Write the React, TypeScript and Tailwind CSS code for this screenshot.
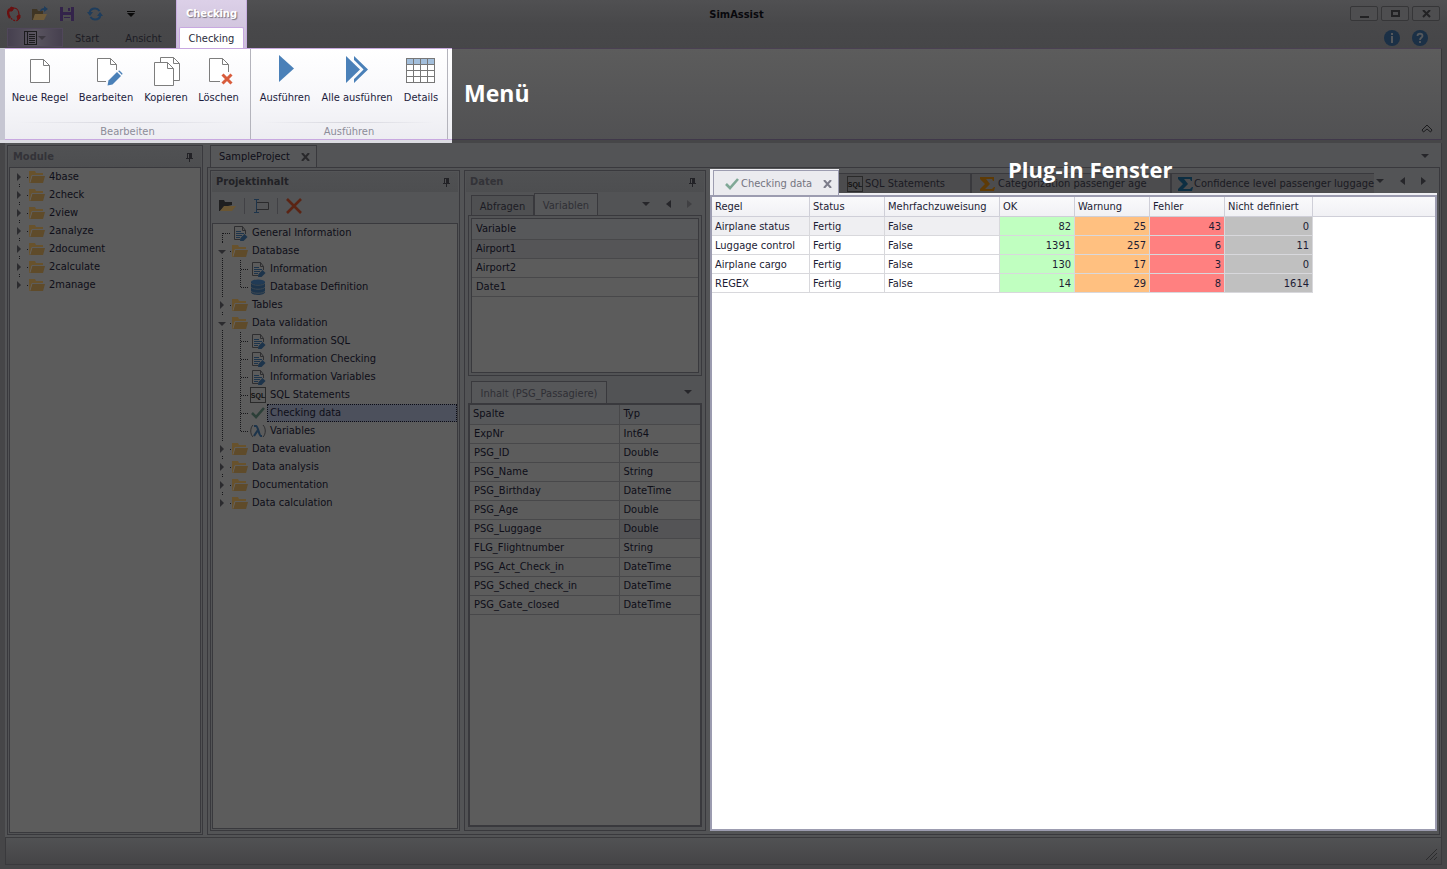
import React, { useState } from "react";

type TreeNode = {
  label: string;
  icon: string;
  open?: boolean;
  children?: TreeNode[];
};

const modules: TreeNode[] = [
  "4base",
  "2check",
  "2view",
  "2analyze",
  "2document",
  "2calculate",
  "2manage",
].map((label) => ({ label, icon: "folder", children: [] }));

const project: TreeNode[] = [
  { label: "General Information", icon: "note" },
  {
    label: "Database",
    icon: "folder",
    open: true,
    children: [
      { label: "Information", icon: "note" },
      { label: "Database Definition", icon: "database" },
    ],
  },
  { label: "Tables", icon: "folder", children: [] },
  {
    label: "Data validation",
    icon: "folder",
    open: true,
    children: [
      { label: "Information SQL", icon: "note" },
      { label: "Information Checking", icon: "note" },
      { label: "Information Variables", icon: "note" },
      { label: "SQL Statements", icon: "sql" },
      { label: "Checking data", icon: "check" },
      { label: "Variables", icon: "lambda" },
    ],
  },
  { label: "Data evaluation", icon: "folder", children: [] },
  { label: "Data analysis", icon: "folder", children: [] },
  { label: "Documentation", icon: "folder", children: [] },
  { label: "Data calculation", icon: "folder", children: [] },
];

const columns = [
  ["ExpNr", "Int64"],
  ["PSG_ID", "Double"],
  ["PSG_Name", "String"],
  ["PSG_Birthday", "DateTime"],
  ["PSG_Age", "Double"],
  ["PSG_Luggage", "Double"],
  ["FLG_Flightnumber", "String"],
  ["PSG_Act_Check_in", "DateTime"],
  ["PSG_Sched_check_in", "DateTime"],
  ["PSG_Gate_closed", "DateTime"],
];

const rules = [
  { name: "Airplane status", ok: 82, warn: 25, error: 43, undef: 0 },
  { name: "Luggage control", ok: 1391, warn: 257, error: 6, undef: 11 },
  { name: "Airplane cargo", ok: 130, warn: 17, error: 3, undef: 0 },
  { name: "REGEX", ok: 14, warn: 29, error: 8, undef: 1614 },
];

/* ---------- icons ---------- */

const FolderIcon = () => (
  <svg width="16" height="14" viewBox="0 0 16 14">
    <path d="M0 1h6l1 2h7v2H3L1 13H0z" fill="#68522c" />
    <path d="M3 6h13l-2 7H1z" fill="#5f4b2a" />
    <path d="M1 12.500l2-7" stroke="#66615a" fill="none" />
  </svg>
);

const NoteIcon = () => (
  <svg width="15" height="15" viewBox="0 0 15 15" fill="none">
    <path d="M12.500 8V4.500l-3-4h-8v13h6M9.500 .5v4h3" stroke="#2e2e30" />
    <path d="M3 5.500h5M3 7.500h8M3 9.500h6M3 11.500h4" stroke="#1d344b" />
    <path d="M7 15l.5-3 4-4 3 3-4 4z" fill="#1d344b" />
  </svg>
);

const DatabaseIcon = () => (
  <svg width="14" height="16" viewBox="0 0 14 16">
    <path d="M0 3v10c0 4 14 4 14 0V3z" fill="#1d344b" />
    <ellipse cx="7" cy="3" rx="7" ry="2.500" fill="#213b56" />
    <path
      d="M0 4c1 3 13 3 14 0M0 8c1 3 13 3 14 0M0 12c1 3 13 3 14 0"
      stroke="#3e4851"
      fill="none"
    />
  </svg>
);

const SqlIcon = () => (
  <svg width="16" height="16" viewBox="0 0 16 16" className="shrink-0">
    <rect x=".5" y=".5" width="15" height="15" fill="none" stroke="#2a2a2a" />
    <text
      x="8"
      y="11"
      textAnchor="middle"
      fontSize="7"
      fontWeight="bold"
      fontFamily="Liberation Sans, sans-serif"
      fill="#111"
    >
      SQL
    </text>
  </svg>
);

const CheckIcon = ({ color = "#2c3f38" }: any) => (
  <svg width="14" height="12" viewBox="0 0 14 12" className="shrink-0">
    <path d="M1 6l4 4 8-9" fill="none" stroke={color} strokeWidth="2.600" />
  </svg>
);

const LambdaIcon = () => (
  <svg width="16" height="14" viewBox="0 0 16 14" fill="none">
    <path d="M3 1C0 4 0 10 3 13M13 1c3 3 3 9 0 12" stroke="#2e2e30" />
    <path
      d="M4 2h2c2 0 3 10 5 10h1M8 6l-4 6"
      stroke="#1d344b"
      strokeWidth="2.200"
    />
  </svg>
);

const SigmaIcon = ({ color }: any) => (
  <svg width="15" height="14" viewBox="0 0 15 14" className="shrink-0">
    <path
      d="M0 0h14v4h-1l-1-2H6l4 5-5 5h7l2-2h1l-1 4H0v-2l5-5-5-5z"
      fill={color}
    />
  </svg>
);

const PinIcon = () => (
  <svg width="7" height="9" viewBox="0 0 7 9" shapeRendering="crispEdges">
    <path d="M1 0h5v5h1v1H4v3H3V6H0V5h1z" fill="#222226" />
    <path d="M2 1h1v4H2z" fill="#515153" />
  </svg>
);

const CrossIcon = ({ color = "#29292c" }: any) => (
  <svg width="9" height="8" viewBox="0 0 9 8">
    <path d="M1 0l7 8M8 0L1 8" stroke={color} strokeWidth="2" />
  </svg>
);

const Triangle = ({ dir, color = "#26262a" }: any) => {
  if (dir === "down") {
    return (
      <svg width="8" height="4" viewBox="0 0 8 4">
        <path d="M0 0h8L4 4z" fill={color} />
      </svg>
    );
  }
  return (
    <svg width="5" height="8" viewBox="0 0 5 8">
      <path d={dir === "left" ? "M5 0v8L0 4z" : "M0 0v8l5-4z"} fill={color} />
    </svg>
  );
};

const nodeIcons: any = {
  folder: <FolderIcon />,
  note: <NoteIcon />,
  database: <DatabaseIcon />,
  sql: <SqlIcon />,
  check: <CheckIcon />,
  lambda: <LambdaIcon />,
};

const Page = ({ d = "M.5 .5h13l6 6v17H.5z", fold = "M13.500 .5v6h6" }: any) => (
  <>
    <path d={d} fill="#fff" stroke="#7d7d7d" />
    <path d={fold} fill="none" stroke="#7d7d7d" />
  </>
);

const ribbonIcons: any = {
  new: (
    <svg width="20" height="26" viewBox="0 0 20 26">
      <Page />
    </svg>
  ),
  edit: (
    <svg width="34" height="28" viewBox="-8 0 34 28">
      <path d="M9 23.500H.5V.5h13l6 6V12" fill="#fff" stroke="#7d7d7d" />
      <path d="M13.500 .5v6h6" fill="none" stroke="#7d7d7d" />
      <path d="M10.500 27.500l1-5 8.500-8.500 4 4-8.500 8.500z" fill="#4a80b8" />
      <path d="M21 13l1.500-.5 3 3L25 17z" fill="#4a80b8" />
    </svg>
  ),
  copy: (
    <svg width="28" height="29" viewBox="-2 0 28 29">
      <g transform="translate(6 0)">
        <Page />
      </g>
      <g transform="translate(0 5)">
        <Page />
      </g>
    </svg>
  ),
  remove: (
    <svg width="29" height="27" viewBox="-5 0 29 27">
      <path d="M11 23.500H.5V.5h13l6 6V14" fill="#fff" stroke="#7d7d7d" />
      <path d="M13.500 .5v6h6" fill="none" stroke="#7d7d7d" />
      <path d="M13.500 16.500l9 9M22.500 16.500l-9 9" stroke="#d85c3c" strokeWidth="3" />
    </svg>
  ),
  run: (
    <svg width="18" height="33" viewBox="-3 0 18 33">
      <path d="M0 0l15 13.500L0 27z" fill="#4a80b8" />
    </svg>
  ),
  runAll: (
    <svg width="22" height="31" viewBox="0 0 22 31">
      <path d="M0 0l14 13.500L0 27z" fill="#4a80b8" />
      <path d="M8 0l14 13.500L8 27v-5.500l8-8-8-8z" fill="#4a80b8" />
      <path d="M7 4l9.500 9.500L7 23" fill="none" stroke="#fff" strokeWidth="1.500" />
    </svg>
  ),
  details: (
    <svg width="31" height="27" viewBox="0 0 31 27" shapeRendering="crispEdges">
      <rect width="29" height="25" fill="#fff" />
      <rect width="29" height="6" fill="#a3bfdc" />
      <path
        d="M0 .5h29M0 6.500h29M0 12.500h29M0 18.500h29M0 24.500h29M.5 0v25M7.500 0v25M14.500 0v25M21.500 0v25M28.500 0v25"
        stroke="#777"
        fill="none"
      />
    </svg>
  ),
};

/* ---------- small parts ---------- */

const RibbonButton = ({ icon, label, width }: any) => (
  <button className={`flex flex-col items-center ${width}`}>
    <span className="flex h-[37px] items-center justify-center">
      {ribbonIcons[icon]}
    </span>
    <span className="whitespace-nowrap leading-4">{label}</span>
  </button>
);

const RibbonGroup = ({ title, children }: any) => (
  <div className="flex flex-col border-r border-[#b4b4bc]">
    <div className="flex h-[73px] px-1 pt-[4px]">{children}</div>
    <div className="mx-3 h-px bg-gradient-to-r from-transparent via-[#d4d4dc] to-transparent" />
    <div className="h-4 text-center leading-[18px] text-[#8c8c98]">{title}</div>
  </div>
);

const Guide = ({ line, arrow, branch, first, last }: any) => {
  const from = first ? 9 : 0;
  const to = last ? 9 : 18;
  return (
    <svg
      width="18"
      height="18"
      viewBox="0 0 18 18"
      className="shrink-0"
      fill="none"
      stroke="#17171a"
      strokeDasharray="1 1"
      shapeRendering="crispEdges"
    >
      {line && !arrow && <path d={`M9.500 ${from}V${to}`} />}
      {arrow && !first && <path d="M9.500 0v2" />}
      {arrow && !last && <path d="M9.500 16v2" />}
      {branch && !arrow && <path d="M10 9.500h8" />}
      {arrow && <path d="M17 9.500h1" />}
      {arrow && (
        <path
          d={arrow === "right" ? "M7 5v8l4-4z" : "M5 8h8l-4 4z"}
          fill="#2b2b2e"
          stroke="none"
          shapeRendering="auto"
        />
      )}
    </svg>
  );
};

const TreeLabel = ({ node, selected, onSelect }: any) => (
  <>
    <span className="flex w-[18px] shrink-0 items-center justify-center">
      {nodeIcons[node.icon]}
    </span>
    <button
      onClick={() => onSelect(node.label)}
      className={`h-[18px] whitespace-nowrap border border-dotted pl-0.5 pr-1 text-left leading-4 ${
        selected === node.label
          ? "flex-1 border-[#0c0c14] bg-[#4c505c]"
          : "border-transparent"
      }`}
    >
      {node.label}
    </button>
  </>
);

const Tree = ({ nodes, selected, onSelect }: any) => (
  <ul>
    {nodes.map((node: TreeNode, i: number) => {
      const last = i === nodes.length - 1;
      return (
        <li key={node.label}>
          <div className="flex h-[18px] items-center">
            <Guide
              line
              branch
              first={i === 0}
              last={last}
              arrow={node.children && (node.open ? "down" : "right")}
            />
            <TreeLabel node={node} selected={selected} onSelect={onSelect} />
          </div>
          {node.open && (
            <ul>
              {node.children?.map((child, j) => (
                <li key={child.label} className="flex h-[18px] items-center">
                  <Guide line={!last} />
                  <Guide line branch last={j === node.children!.length - 1} />
                  <TreeLabel node={child} selected={selected} onSelect={onSelect} />
                </li>
              ))}
            </ul>
          )}
        </li>
      );
    })}
  </ul>
);

const PanelHeader = ({ title, active }: any) => (
  <div className="flex h-5 shrink-0 items-center justify-between bg-gradient-to-b from-[#505153] to-[#4d4e50] pl-1 pr-2">
    <h2 className={`font-bold ${active ? "text-[#222226]" : "text-[#333338]"}`}>
      {title}
    </h2>
    <button aria-label="Fixieren">
      <PinIcon />
    </button>
  </div>
);

const TitleBar = () => (
  <header className="flex h-12 shrink-0 bg-gradient-to-b from-[#505052] via-[#48484a] to-[#464648]">
    <div className="flex w-44 flex-col">
      <div className="flex h-[27px] items-center pl-[7px]">
        <svg width="14" height="16" viewBox="0 0 14 16" fill="none" stroke="#6a1010">
          <path d="M3 3C0 5 1 9 3 12" strokeWidth="2.400" />
          <path d="M4 1l3 1-2 3-3 0z" fill="#6a1010" />
          <path d="M7 2c3 0 5 3 5 7" strokeWidth="1.200" />
          <path d="M4 12c2 3 5 3 7 2" strokeWidth="1.200" strokeDasharray="2 1" />
          <path d="M10 10l3-1v3l-2 2z" fill="#6a1010" />
        </svg>
        <button aria-label="Öffnen" className="ml-[11px]">
          <svg width="16" height="15" viewBox="0 0 16 15">
            <path d="M0 3h5l1 2h5v3H3l-2 6H0z" fill="#3f3524" />
            <path d="M3 8h12l-3 6H1z" fill="#6e5a38" />
            <path d="M8 6c0-3 2-4 4-4V0l4 3-4 3V4c-2 0-3 1-4 2z" fill="#1f3d5c" />
          </svg>
        </button>
        <button aria-label="Speichern" className="ml-3">
          <svg width="14" height="14" viewBox="0 0 14 14">
            <path d="M0 0h14v14H0z" fill="#33234a" />
            <path d="M3 0h8v5H3zM3 8h8v6H3z" fill="#4d4d4f" />
            <path d="M8 1h2v3H8zM4 10h6v1H4z" fill="#33234a" />
          </svg>
        </button>
        <button aria-label="Aktualisieren" className="ml-[13px]">
          <svg width="16" height="14" viewBox="0 0 16 14" fill="none">
            <path d="M2.500 6C3 3 5 1.500 8 1.500c2 0 3.500 1 4.500 2.500M13.500 8c-.5 3-2.500 4.500-5.500 4.500-2 0-3.500-1-4.500-2.500" stroke="#1f3d5c" strokeWidth="2" />
            <path d="M0 5h6L3 9zM10 9h6l-3-4z" fill="#1f3d5c" />
          </svg>
        </button>
        <button aria-label="Anpassen" className="ml-6">
          <svg width="8" height="6" viewBox="0 0 8 6">
            <path d="M0 0h8v1H0zM0 2h8L4 6z" fill="#0a0a0a" />
          </svg>
        </button>
      </div>
      <nav className="flex h-[21px] items-center text-[#1c1c24]">
        <button
          aria-label="Datei"
          className="ml-[7px] flex h-[19px] w-14 items-center justify-center gap-px border border-[#50475a] bg-gradient-to-r from-[#46404f] via-[#5a5560] to-[#46404f]"
        >
          <svg width="13" height="14" viewBox="0 0 13 14" fill="none" stroke="#1c1c1e" shapeRendering="crispEdges">
            <path d="M.5 .5h12v13H.5zM3.500 0v14M5 3.500h6M5 5.500h6M5 7.500h6M5 9.500h6M5 11.500h6" />
          </svg>
          <Triangle dir="down" color="#3c3840" />
        </button>
        <button className="ml-3 pt-0.5">Start</button>
        <button className="ml-[26px] pt-0.5">Ansicht</button>
      </nav>
    </div>
    <div className="flex w-[71px] flex-col border-x border-[#c8aee0] bg-gradient-to-b from-[#dcd0e8] to-[#cbbfd8]">
      <div className="h-[27px] text-center font-bold leading-[27px] text-white [text-shadow:1px_1px_1px_#77737f]">
        Checking
      </div>
      <button className="mx-[2px] h-[22px] rounded-t-xs border border-b-0 border-[#c8a8e0] bg-white pt-0.5 text-[#2a2a3a]">
        Checking
      </button>
    </div>
    <h1 className="flex-1 text-center font-bold leading-[29px] text-[#08080c]">
      SimAssist
    </h1>
    <div className="flex w-[221px] flex-col items-end pr-[7px]">
      <div className="flex h-[27px] items-center gap-[3px]">
        {["Minimieren", "Maximieren", "Schließen"].map((name) => (
          <button
            key={name}
            aria-label={name}
            className="flex h-[15px] w-7 items-center justify-center rounded-xs border border-[#363638] bg-[#4e4e50]"
          >
            <svg width="9" height="8" viewBox="0 0 9 8" fill="none" stroke="#222224" strokeWidth="2">
              {name === "Minimieren" && <path d="M0 7h9" />}
              {name === "Maximieren" && <path d="M1 1h7v5H1z" />}
              {name === "Schließen" && <path d="M1 0l7 7M8 0L1 7" />}
            </svg>
          </button>
        ))}
      </div>
      <div className="flex h-[21px] items-center gap-3 pr-3">
        <button aria-label="Info">
          <svg width="16" height="16" viewBox="0 0 16 16">
            <circle cx="8" cy="8" r="8" fill="#1b3046" />
            <path d="M7 3h2v2H7zM7 6h2v7H7z" fill="#55585c" />
          </svg>
        </button>
        <button aria-label="Hilfe">
          <svg width="16" height="16" viewBox="0 0 16 16" fill="none">
            <circle cx="8" cy="8" r="8" fill="#1b3046" />
            <path d="M5.500 6c0-3 5-3 5 0C10.500 7.500 8 7.500 8 10M8 11v2" stroke="#55585c" strokeWidth="1.800" />
          </svg>
        </button>
      </div>
    </div>
  </header>
);

const Ribbon = () => (
  <section className="flex h-[95px] shrink-0">
    <div className="flex border-b-[3px] border-[#dcdce2] bg-[#c6c6d2] pl-[5px]">
      <div className="flex border-y border-[#c8a8e0] bg-gradient-to-b from-white via-[#f8f8fb] to-[#ededf2] text-[#1c1c3c]">
        <RibbonGroup title="Bearbeiten">
          <RibbonButton icon="new" label="Neue Regel" width="w-[62px]" />
          <RibbonButton icon="edit" label="Bearbeiten" width="w-[70px]" />
          <RibbonButton icon="copy" label="Kopieren" width="w-[50px]" />
          <RibbonButton icon="remove" label="Löschen" width="w-[55px]" />
        </RibbonGroup>
        <RibbonGroup title="Ausführen">
          <RibbonButton icon="run" label="Ausführen" width="w-[60px]" />
          <RibbonButton icon="runAll" label="Alle ausführen" width="w-[84px]" />
          <RibbonButton icon="details" label="Details" width="w-[44px]" />
        </RibbonGroup>
        <div className="w-1" />
      </div>
    </div>
    <div className="mb-[3px] mr-[5px] flex flex-1 items-center justify-between border-y border-r border-t-[#4a4052] border-r-[#363638] border-b-[#40384a] bg-gradient-to-b from-[#5c5c5c] to-[#515153] pl-3">
      <span className="pb-0.5 font-['Open_Sans',sans-serif] text-[23px] font-bold leading-7 text-white">
        Menü
      </span>
      <button aria-label="Menüband minimieren" className="mr-2 self-end pb-1.5">
        <svg width="12" height="9" viewBox="0 0 12 9" fill="none" stroke="#1c1c1e">
          <path d="M1 6l5-5 5 5-1.500 2L6 5 2.500 8z" />
        </svg>
      </button>
    </div>
  </section>
);

const ModulePanel = () => {
  const [selected, setSelected] = useState("");
  return (
    <aside className="flex w-[196px] shrink-0 flex-col border border-[#39393d] bg-[#525355] p-px">
      <PanelHeader title="Module" />
      <div className="flex-1 border border-[#39393d] bg-[#5c5c5c]">
        <Tree nodes={modules} selected={selected} onSelect={setSelected} />
      </div>
    </aside>
  );
};

const ProjectPanel = () => {
  const [selected, setSelected] = useState("Checking data");
  return (
    <section className="flex w-[250px] shrink-0 flex-col border border-[#39393d] bg-[#545557] p-px">
      <PanelHeader title="Projektinhalt" active />
      <div className="flex h-[31px] items-center pb-[3px] pl-[7px]">
        <button aria-label="Öffnen">
          <svg width="17" height="12" viewBox="0 0 17 12">
            <path d="M0 0h5l1 2h7v3L5 7l-4 4H0z" fill="#1f1f20" />
            <path d="M5 6h12l-4 5H1z" fill="#6a5633" />
          </svg>
        </button>
        <span className="ml-2 h-4 w-px bg-[#414145]" />
        <button aria-label="Umbenennen" className="ml-2">
          <svg width="16" height="14" viewBox="0 0 16 14" fill="none">
            <path d="M4 3.500h11.500v7H4" stroke="#2a2a2c" />
            <path d="M1 .5h5M1 13.500h5M3.500 0v14" stroke="#1d344b" />
          </svg>
        </button>
        <span className="ml-2 h-4 w-px bg-[#414145]" />
        <button aria-label="Löschen" className="ml-2">
          <svg width="16" height="16" viewBox="0 0 16 16">
            <path d="M1 1l14 14M15 1L1 15" stroke="#5b2414" strokeWidth="2.600" />
          </svg>
        </button>
      </div>
      <div className="flex-1 border border-[#39393d] bg-[#5c5c5c]">
        <Tree nodes={project} selected={selected} onSelect={setSelected} />
      </div>
    </section>
  );
};

const DataPanel = () => (
  <section className="flex w-[242px] shrink-0 flex-col border border-[#39393d] bg-[#525355] px-[3px] pb-[3px] pt-px">
    <div className="-mx-0.5">
      <PanelHeader title="Daten" />
    </div>
    <div className="flex h-[23px] shrink-0 items-end pl-[3px]">
      <button className="h-[20px] w-[63px] border border-b-0 border-[#39393d] bg-[#4f5052] pt-0.5 text-[#1c1c24]">
        Abfragen
      </button>
      <button className="h-[22px] w-[64px] border border-b-0 border-[#39393d] bg-[#565759] pt-0.5 text-[#2f2f35]">
        Variablen
      </button>
      <div className="flex h-full flex-1 items-center justify-end gap-4 pr-[10px]">
        <Triangle dir="down" />
        <Triangle dir="left" />
        <Triangle dir="right" color="#404043" />
      </div>
    </div>
    <div className="h-[161px] shrink-0 border border-[#39393d] p-0.5">
      <div className="h-full border border-[#39393d] bg-[#5c5c5c]">
        <table className="w-full border-collapse text-left">
          <thead>
            <tr className="h-5 border-b border-[#48484a] bg-[#57585a]">
              <th className="pl-1 font-normal">Variable</th>
            </tr>
          </thead>
          <tbody>
            {["Airport1", "Airport2", "Date1"].map((name, i) => (
              <tr
                key={name}
                className={`h-[19px] border-b border-[#48484a] ${i === 0 ? "bg-[#555557]" : ""}`}
              >
                <td className="pl-1">{name}</td>
              </tr>
            ))}
          </tbody>
        </table>
      </div>
    </div>
    <div className="mt-[5px] flex h-[22px] shrink-0 items-center justify-between pl-[3px] pr-[10px]">
      <button className="h-[22px] w-[136px] border border-b-0 border-[#39393d] bg-[#565759] pt-0.5 text-[#2f2f35]">
        Inhalt (PSG_Passagiere)
      </button>
      <Triangle dir="down" />
    </div>
    <div className="flex-1 border-2 border-[#39393d] bg-[#5c5c5c]">
      <table className="w-full table-fixed border-collapse text-left">
        <colgroup>
          <col className="w-[149px]" />
          <col />
        </colgroup>
        <thead>
          <tr className="h-[19px] border-b border-[#48484a] bg-[#57585a]">
            <th className="border-r border-[#48484a] pl-[3px] font-normal">Spalte</th>
            <th className="pl-1 font-normal">Typ</th>
          </tr>
        </thead>
        <tbody>
          {columns.map(([name, type]) => (
            <tr key={name} className="h-[19px] border-b border-[#48484a]">
              <td className="border-r border-[#48484a] pl-1">{name}</td>
              <td className={`pl-1 ${name === "PSG_Luggage" ? "bg-[#545456]" : ""}`}>
                {type}
              </td>
            </tr>
          ))}
        </tbody>
      </table>
    </div>
  </section>
);

const head = "border-b border-r border-[#cfcfd8] pl-[3px] font-normal";
const cell = "border-b border-r border-[#d8d8dc]";

const PluginWindow = () => (
  <section className="relative flex min-w-0 flex-1 flex-col">
    <div className="flex h-[26px] shrink-0">
      <div className="flex bg-[#f0f0f4] pl-[3px]">
        <div className="mt-px flex w-[126px] items-center border border-b-0 border-[#9c9cb0] bg-[#ebebef] pl-[11px] pt-px text-[#74747f]">
          <CheckIcon color="#7fa896" />
          <button className="ml-0.5 flex-1 text-left">Checking data</button>
          <button aria-label="Schließen" className="mr-[6px]">
            <CrossIcon color="#7c7c8a" />
          </button>
        </div>
      </div>
      <div className="flex min-w-0 flex-1 border-b-2 border-[#f0f0f4]">
        <div className="mt-1 flex min-w-0 flex-1 border-t border-[#39393d] bg-[#4c4c4e] text-[#1a1a22]">
          <button className="flex w-[133px] shrink-0 items-center gap-0.5 border-r-2 border-[#39393d] pl-2">
            <SqlIcon />
            SQL Statements
          </button>
          <button className="flex w-[200px] shrink-0 items-center gap-[3px] whitespace-nowrap border-r-2 border-[#39393d] pl-2">
            <SigmaIcon color="#5e3b06" />
            Categorization passenger age
          </button>
          <button className="flex min-w-0 flex-1 items-center gap-px whitespace-nowrap pl-[6px]">
            <SigmaIcon color="#0d2e42" />
            Confidence level passenger luggage
          </button>
        </div>
        <div className="flex w-[63px] shrink-0 items-center justify-end gap-4 pr-[11px]">
          <Triangle dir="down" />
          <Triangle dir="left" />
          <Triangle dir="right" />
        </div>
      </div>
    </div>
    <div className="flex-1 border-2 border-[#9c9cb0] bg-white text-[#1c1c34]">
      <table className="w-full table-fixed border-separate border-spacing-0 text-left">
        <colgroup>
          <col className="w-[98px]" />
          <col className="w-[75px]" />
          <col className="w-[115px]" />
          <col className="w-[75px]" />
          <col className="w-[75px]" />
          <col className="w-[75px]" />
          <col className="w-[88px]" />
          <col />
        </colgroup>
        <thead>
          <tr className="h-5 bg-gradient-to-b from-[#fafafc] to-[#f0f0f4]">
            {["Regel", "Status", "Mehrfachzuweisung", "OK", "Warnung", "Fehler", "Nicht definiert"].map(
              (title) => (
                <th key={title} className={head}>
                  {title}
                </th>
              ),
            )}
            <td className="border-b border-[#cfcfd8]" />
          </tr>
        </thead>
        <tbody>
          {rules.map((rule, i) => (
            <tr key={rule.name} className="h-[19px]">
              <td className={`${cell} pl-[3px] pt-px ${i === 0 ? "bg-[#efeff2]" : ""}`}>{rule.name}</td>
              <td className={`${cell} pl-[3px] pt-px ${i === 0 ? "bg-[#efeff2]" : ""}`}>Fertig</td>
              <td className={`${cell} pl-[3px] pt-px ${i === 0 ? "bg-[#efeff2]" : ""}`}>False</td>
              <td className={`${cell} bg-[#c0ffc0] pr-[3px] pt-px text-right`}>{rule.ok}</td>
              <td className={`${cell} bg-[#ffc080] pr-[3px] pt-px text-right`}>{rule.warn}</td>
              <td className={`${cell} bg-[#ff8080] pr-[3px] pt-px text-right`}>{rule.error}</td>
              <td className={`${cell} bg-[#c0c0c0] pr-[3px] pt-px text-right`}>{rule.undef}</td>
              <td />
            </tr>
          ))}
        </tbody>
      </table>
    </div>
    <span className="pointer-events-none absolute -top-3.5 left-[298px] whitespace-nowrap font-['Open_Sans',sans-serif] text-[22px] font-bold leading-7 text-white">
      Plug-in Fenster
    </span>
  </section>
);

const App = () => {
  return (
    <div className="flex h-screen min-h-[640px] flex-col bg-[#464648] font-['DejaVu_Sans_Condensed','Liberation_Sans',sans-serif] text-[11px] leading-[14px] text-[#0e0e18]">
      <TitleBar />
      <Ribbon />
      <main className="mx-[5px] flex min-h-0 flex-1 border-r border-[#39393d] bg-[#535456] pb-0.5 pl-0.5 pt-0.5">
        <ModulePanel />
        <div className="ml-1 mr-px flex min-w-0 flex-1 flex-col">
          <div className="flex h-[22px] shrink-0 items-center justify-between pl-[3px] pr-[11px]">
            <div className="flex h-[22px] w-[107px] items-center justify-between border border-b-0 border-[#39393d] bg-[#565759] pl-2 pr-[6px] pt-px">
              <button>SampleProject</button>
              <button aria-label="Schließen">
                <CrossIcon />
              </button>
            </div>
            <Triangle dir="down" />
          </div>
          <div className="flex min-h-0 flex-1 border border-[#39393d] pb-[3px] pl-0.5 pr-0.5 pt-px">
            <div className="mr-1 flex gap-1 pt-px">
              <ProjectPanel />
              <DataPanel />
            </div>
            <PluginWindow />
          </div>
        </div>
      </main>
      <footer className="mx-[5px] mb-1 flex h-7 shrink-0 items-end justify-end border border-[#3a3a3d] bg-gradient-to-b from-[#515254] to-[#454547] pb-1 pr-1">
        <svg width="11" height="11" viewBox="0 0 11 11" stroke="#2c2c2e">
          <path d="M0 11L11 0M4 11l7-7M8 11l3-3" />
        </svg>
      </footer>
    </div>
  );
};

export default App;
